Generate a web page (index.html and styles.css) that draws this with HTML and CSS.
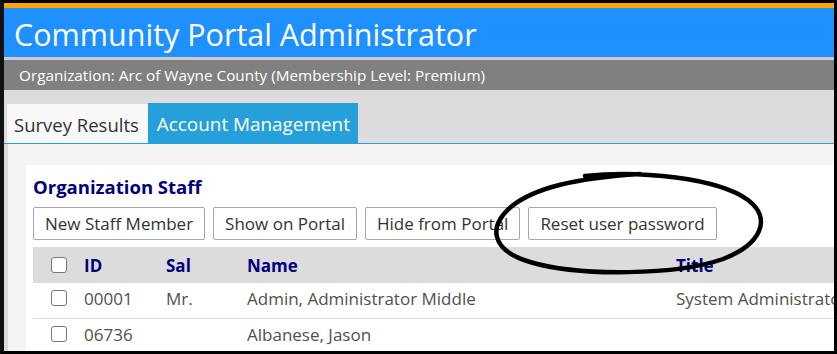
FILE: index.html
```html
<!DOCTYPE html>
<html lang="en">
<head>
  <meta charset="UTF-8" />
  <title>Community Portal Administrator</title>
  <link rel="stylesheet" href="styles.css">
</head>
<body>
  <div class="frame">
    <div class="header">
      <h1>Community Portal Administrator</h1>
    </div>
    <div class="org-bar">Organization: Arc of Wayne County (Membership Level: Premium)</div>

    <div class="tabs">
      <div class="tab">Survey Results</div>
      <div class="tab active">Account Management</div>
    </div>

    <div class="tab-body">
      <div class="panel">
        <h2>Organization Staff</h2>
        <div class="toolbar">
          <button>New Staff Member</button>
          <button>Show on Portal</button>
          <button>Hide from Portal</button>
          <button>Reset user password</button>
        </div>

        <table class="staff">
          <colgroup>
            <col class="c-cb">
            <col class="c-id">
            <col class="c-sal">
            <col class="c-name">
            <col>
          </colgroup>
          <thead>
            <tr>
              <th class="cb"><span class="check"></span></th>
              <th>ID</th>
              <th>Sal</th>
              <th>Name</th>
              <th>Title</th>
            </tr>
          </thead>
          <tbody>
            <tr>
              <td class="cb"><span class="check"></span></td>
              <td>00001</td>
              <td>Mr.</td>
              <td>Admin, Administrator Middle</td>
              <td>System Administrator</td>
            </tr>
            <tr>
              <td class="cb"><span class="check"></span></td>
              <td>06736</td>
              <td></td>
              <td>Albanese, Jason</td>
              <td></td>
            </tr>
          </tbody>
        </table>
      </div>
    </div>

    <!-- hand drawn circle round the reset button -->
    <svg class="marker" width="837" height="354" viewBox="0 0 837 354">
      <path d="M 585 176 C 640 170, 718 178, 748 200 C 772 218, 762 244, 723 259 C 678 275, 580 277, 530 262 C 490 250, 488 226, 512 206 C 535 188, 575 178, 640 174"
            fill="none" stroke="#000" stroke-width="4.5" stroke-linecap="round"/>
    </svg>
  </div>
</body>
</html>
```

FILE: styles.css
```css
body {
  margin: 0;
  padding: 0;
  font-family: 'Open Sans', sans-serif;
  background: #fff;
}

.frame {
  position: relative;
  width: 830px;
  height: 348px;
  border-top: 3px solid #000;
  border-left: 4px solid #111;
  border-right: 3px solid #000;
  border-bottom: 3px solid #000;
  background: #dcdcdc;
  overflow: hidden;
}

.header {
  background: #1e90ff;
  border-top: 5px solid #ffa500;
  border-bottom: 3px solid #ccc;
  box-sizing: border-box;
  height: 57px;
}

.header h1 {
  margin: 0;
  padding: 6px 0 0 10px;
  color: #fff;
  font-weight: 400;
  font-size: 30.5px;
  line-height: 40px;
}

.org-bar {
  background: #808080;
  color: #fff;
  font-size: 15.3px;
  height: 30px;
  line-height: 30px;
  padding-left: 15px;
}

.tabs {
  display: flex;
  align-items: flex-end;
  padding: 13px 0 0 3px;
  border-bottom: 1px solid #26a0da;
}

.tab {
  background: #f8f8f8;
  color: #333;
  font-size: 18.5px;
  height: 39px;
  line-height: 42px;
  padding: 0 9px 0 7px;
}

.tab.active {
  background: #26a0da;
  color: #fff;
  font-size: 18.9px;
  height: 40px;
  padding: 0 8px 0 9px;
}

.tab-body {
  background: #f4f4f4;
  margin-left: 3px;
  border-left: 1px solid #ddd;
  padding: 21px 0 0 18px;
  height: 200px;
}

.panel {
  background: #fff;
  padding: 7px 0 0 7px;
  height: 200px;
}

.panel h2 {
  margin: 0;
  color: #000080;
  font-size: 18.5px;
  font-weight: 700;
  line-height: 29px;
}

.toolbar {
  display: flex;
  gap: 8px;
  margin-top: 6px;
}

.toolbar button {
  font-family: inherit;
  font-size: 17px;
  color: #333;
  background: #fff;
  border: 1px solid #a8a8a8;
  border-radius: 2px;
  height: 33px;
  padding: 0 11px;
}

.staff {
  margin-top: 7px;
  width: 100%;
  table-layout: fixed;
  border-collapse: collapse;
  font-size: 17px;
  color: #505050;
}

.c-cb { width: 51px; }
.c-id { width: 82px; }
.c-sal { width: 81px; }
.c-name { width: 429px; }

.staff th {
  background: #dcdcdc;
  color: #000080;
  font-weight: 700;
  text-align: left;
  height: 36px;
  padding: 0;
}

.staff td {
  height: 30px;
  padding: 0 0 5px;
  border-bottom: 1px solid #ddd;
  white-space: nowrap;
  overflow: hidden;
}

.staff .cb {
  padding-left: 18px;
}

.check {
  display: block;
  width: 14px;
  height: 14px;
  border: 1px solid #777;
  border-radius: 3px;
  background: #fff;
}

.marker {
  position: absolute;
  left: -4px;
  top: -3px;
  pointer-events: none;
}
```
